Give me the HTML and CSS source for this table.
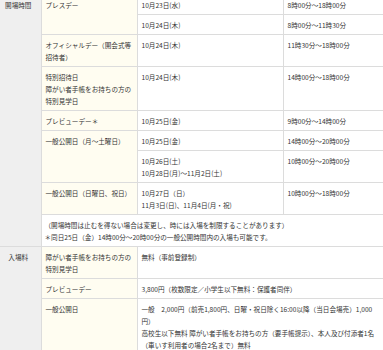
FILE: index.html
```
<!DOCTYPE html>
<html lang="ja">
<head>
<meta charset="utf-8">
<link rel="stylesheet" href="styles.css">
</head>
<body>
<table class="info">
  <colgroup>
    <col class="c-head">
    <col class="c-label">
    <col class="c-date">
    <col class="c-time">
  </colgroup>
  <tbody>
    <tr>
      <th class="head" rowspan="9">開場時間</th>
      <td class="label" rowspan="2">プレスデー</td>
      <td>10月23日(水)</td>
      <td>8時00分〜18時00分</td>
    </tr>
    <tr>
      <td>10月24日(木)</td>
      <td>8時00分〜11時30分</td>
    </tr>
    <tr>
      <td class="label">オフィシャルデー（開会式等<br>招待者）</td>
      <td>10月24日(木)</td>
      <td>11時30分〜18時00分</td>
    </tr>
    <tr>
      <td class="label">特別招待日<br>障がい者手帳をお持ちの方の<br>特別見学日</td>
      <td>10月24日(木)</td>
      <td>14時00分〜18時00分</td>
    </tr>
    <tr>
      <td class="label">プレビューデー＊</td>
      <td>10月25日(金)</td>
      <td>9時00分〜14時00分</td>
    </tr>
    <tr>
      <td class="label" rowspan="2">一般公開日（月〜土曜日）</td>
      <td>10月25日(金)</td>
      <td>14時00分〜20時00分</td>
    </tr>
    <tr>
      <td>10月26日(土)<br>10月28日(月)〜11月2日(土)</td>
      <td>10時00分〜20時00分</td>
    </tr>
    <tr>
      <td class="label">一般公開日（日曜日、祝日）</td>
      <td>10月27日（日）<br>11月3日(日)、11月4日(月・祝)</td>
      <td>10時00分〜18時00分</td>
    </tr>
    <tr>
      <td class="note" colspan="3">（開場時間は止むを得ない場合は変更し、時には入場を制限することがあります）<br>＊同日25日（金）14時00分〜20時00分の一般公開時間内の入場も可能です。</td>
    </tr>
    <tr>
      <th class="head" rowspan="3">入場料</th>
      <td class="label">障がい者手帳をお持ちの方の<br>特別見学日</td>
      <td colspan="2">無料（事前登録制）</td>
    </tr>
    <tr>
      <td class="label">プレビューデー</td>
      <td colspan="2">3,800円（枚数限定／小学生以下無料：保護者同伴）</td>
    </tr>
    <tr>
      <td class="label">一般公開日</td>
      <td colspan="2">一般　2,000円（前売1,800円、日曜・祝日除く16:00以降（当日会場売）1,000<br>円）<br>高校生以下無料 障がい者手帳をお持ちの方（要手帳提示）、本人及び付添者1名<br>（車いす利用者の場合2名まで）無料</td>
    </tr>
  </tbody>
</table>
</body>
</html>
```
FILE: styles.css
```
html, body {
  margin: 0;
  padding: 0;
  background: #ffffff;
  overflow: hidden;
}

body {
  font-family: "Noto Sans CJK JP", "Noto Sans", sans-serif;
  font-size: 6.6px;
  line-height: 12px;
  color: #333333;
}

.info {
  border-collapse: collapse;
  table-layout: fixed;
  width: 384px;
  margin-top: -6px;
}

.c-head { width: 41px; }
.c-label { width: 96px; }
.c-date { width: 146px; }
.c-time { width: 101px; }

.info th,
.info td {
  border: 1px solid #dcdcdc;
  padding: 4px 2px 3px 4px;
  vertical-align: top;
  text-align: left;
  white-space: nowrap;
  font-weight: normal;
}

.info .head {
  background: #efefef;
  text-align: center;
  padding-left: 0;
  padding-right: 4px;
  border-left: none;
}

.info .label {
  background: #fffdf1;
}

.info .note {
  padding-left: 3px;
}
```
